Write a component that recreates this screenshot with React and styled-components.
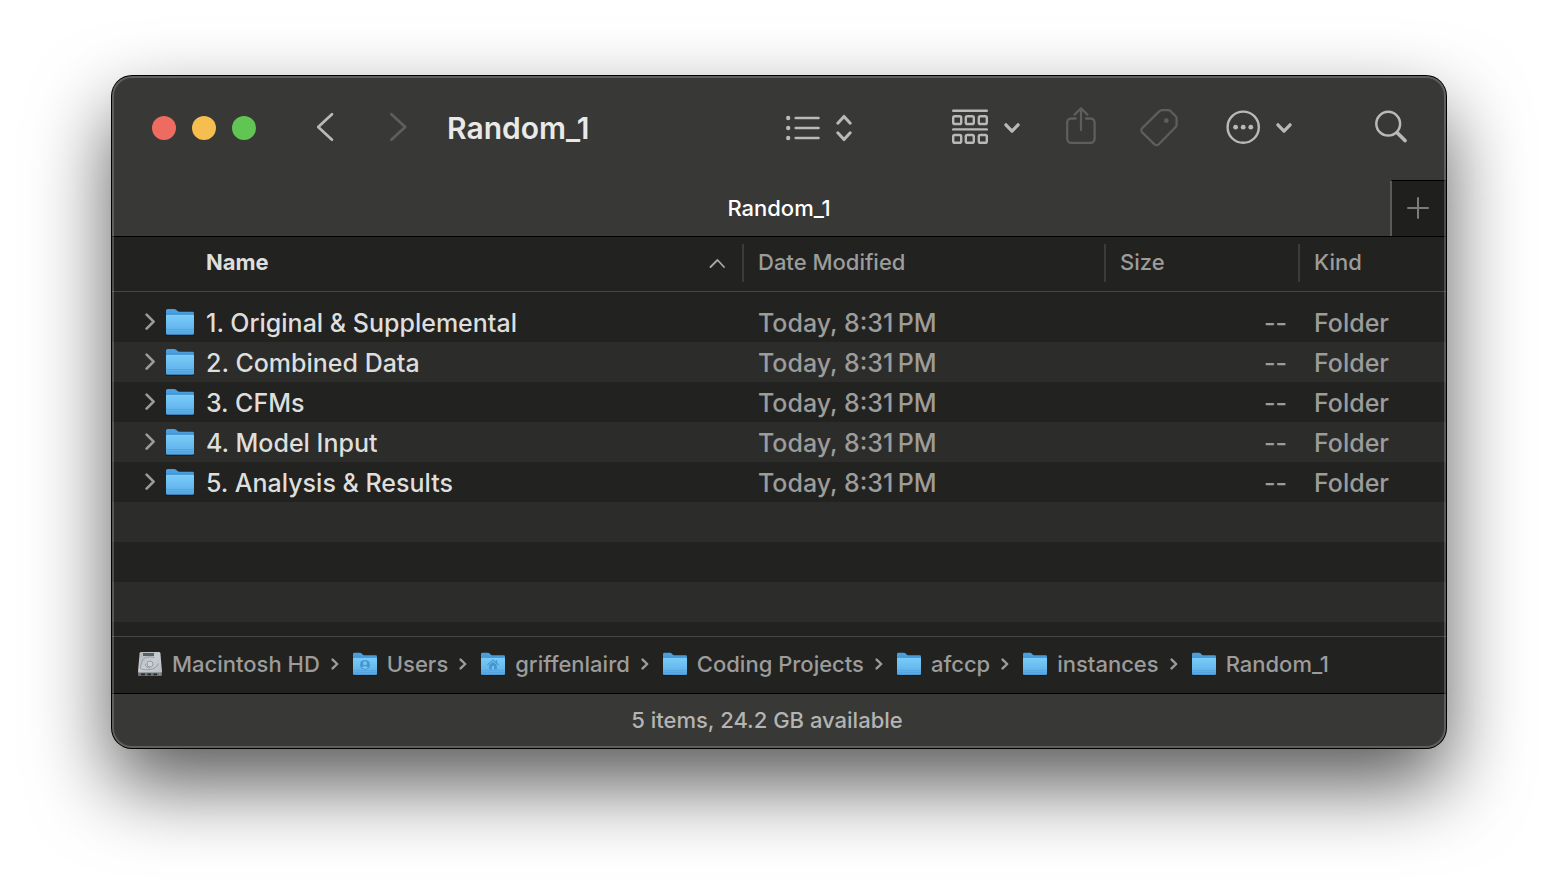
import React from "react";
import styled, { createGlobalStyle } from "styled-components";

const GlobalStyle = createGlobalStyle`
  *, *::before, *::after { box-sizing: border-box; }
  body {
    margin: 0;
    background: #fff;
    font-family: Inter, "Liberation Sans", sans-serif;
    -webkit-font-smoothing: antialiased;
  }
  button { border: 0; padding: 0; background: none; color: inherit; font: inherit; }
  a { color: inherit; text-decoration: none; }
`;

const Desktop = styled.main`
  display: flex;
  min-height: 100vh;
  padding: 76px 112px 148px;
`;

const Window = styled.section`
  position: relative;
  display: flex;
  flex-direction: column;
  flex: 1;
  min-width: 0;
  border-radius: 20px;
  overflow: hidden;
  background: #222221;
  box-shadow: 0 0 0 1px #000, 0 36px 80px rgba(0, 0, 0, 0.66);

  &::after {
    content: "";
    position: absolute;
    inset: 0;
    border: 2px solid rgba(255, 255, 255, 0.2);
    border-radius: 20px;
    pointer-events: none;
  }
`;

const Toolbar = styled.header`
  display: flex;
  align-items: center;
  height: 104px;
  padding: 0 39px 0 40px;
  background: #383836;
  color: #b9b9b8;
`;

const Lights = styled.div`
  display: flex;
  gap: 16px;
  margin-right: 60px;
`;

const Light = styled.button`
  width: 24px;
  height: 24px;
  border-radius: 50%;
  background: ${(p) => p.$color};
`;

const History = styled.div`
  display: flex;
  gap: 55px;
  margin-right: 40px;
`;

const Title = styled.h1`
  flex: 1;
  margin: 0;
  color: #e9e9e8;
  font-size: 30px;
  line-height: 36px;
  font-weight: 600;
`;

const Tools = styled.div`
  display: flex;
  align-items: center;
  gap: 46px;
`;

const ToolButton = styled.button`
  display: flex;
  align-items: center;
  gap: 16px;
  margin-left: ${(p) => p.$before || 0}px;
  color: ${(p) => (p.$dim ? "#5e5e5c" : "inherit")};
`;

const Icon = styled.svg`
  display: block;
  flex: none;
  fill: none;
  stroke: currentColor;
  stroke-linecap: round;
  stroke-linejoin: round;
`;

const TabBar = styled.nav`
  display: flex;
  height: 56px;
  background: #383836;
`;

const Tab = styled.button`
  flex: 1;
  padding-left: 56px;
  color: #fff;
  font-size: 22px;
  line-height: 28px;
  font-weight: 500;
`;

const NewTab = styled.button`
  display: flex;
  align-items: center;
  justify-content: center;
  width: 56px;
  padding: 0 2px 2px 0;
  border-top: 1px solid #000;
  border-left: 2px solid #5a5a59;
  background: #1f1f1e;
  color: #7b7b7a;
`;

const FileTable = styled.table`
  width: 100%;
  table-layout: fixed;
  border-spacing: 0;

  tbody::before {
    content: "";
    display: block;
    height: 10px;
  }
`;

const Column = styled.col`
  width: ${(p) => p.$width};
`;

const HeadCell = styled.th`
  height: 56px;
  padding: 7px 0 9px;
  border-top: 1px solid #000;
  border-bottom: 1px solid #454544;
  text-align: left;
  vertical-align: top;
`;

const SortButton = styled.button`
  display: flex;
  align-items: center;
  justify-content: space-between;
  width: 100%;
  height: 38px;
  padding: 0 17px 2px ${(p) => (p.$active ? 94 : 14)}px;
  border-left: ${(p) => (p.$active ? "0" : "2px solid #3b3b3a")};
  color: ${(p) => (p.$active ? "#dededd" : "#9c9c9b")};
  font-size: 22px;
  font-weight: ${(p) => (p.$active ? 700 : 500)};
`;

const SortArrow = styled(Icon)`
  color: #a8a8a7;
`;

const FileRow = styled.tr`
  height: 40px;
  background: ${(p) => (p.$shaded ? "#2c2c2b" : "transparent")};
`;

const Cell = styled.td`
  padding: 2px 11px 0 16px;
  color: #9c9c9b;
  font-size: 25px;
  line-height: 32px;
  font-weight: 500;
  text-align: ${(p) => p.$align || "left"};
  white-space: nowrap;
`;

const NameCell = styled.td`
  padding: 0 0 0 33px;
`;

const NameLine = styled.div`
  display: flex;
  align-items: center;
`;

const FileName = styled.span`
  padding-top: 2px;
  color: #dededd;
  font-size: 25px;
  line-height: 32px;
  font-weight: 500;
  white-space: nowrap;
`;

const Disclosure = styled.button`
  margin-right: 11px;
  color: #9c9c9b;
`;

const FileIcon = styled.svg`
  display: block;
  flex: none;
  margin-right: ${(p) => p.$after}px;
`;

const EmptyRows = styled.div`
  flex: 1;
  background: repeating-linear-gradient(#2c2c2b 0 40px, #222221 40px 80px);
`;

const PathBar = styled.nav`
  height: 58px;
  border-top: 1px solid #454544;
  border-bottom: 1px solid #000;
  background: #222221;
`;

const PathList = styled.ol`
  display: flex;
  align-items: center;
  height: 100%;
  margin: 0;
  padding: 0 0 2px 26px;
  list-style: none;
`;

const PathItem = styled.li`
  display: flex;
  align-items: center;
  color: #9c9c9b;
`;

const PathLink = styled.a`
  display: flex;
  align-items: center;
  font-size: 22px;
  line-height: 28px;
  font-weight: 500;
`;

const PathArrow = styled(Icon)`
  margin: 0 14px 0 11px;
`;

const StatusBar = styled.footer`
  display: flex;
  align-items: center;
  justify-content: center;
  height: 54px;
  padding: 0 24px 2px 0;
  background: #383836;
  color: #b4b4b3;
  font-size: 22px;
  line-height: 28px;
  font-weight: 500;
`;

function ChevronDown() {
  return (
    <Icon width="16" height="44" strokeWidth="3.2">
      <path d="M1.9 18.8L8 25.2L14.1 18.8" />
    </Icon>
  );
}

function Folder({ size, after, badge, id }) {
  return (
    <FileIcon width={size} height={size} viewBox="0 0 28 28" $after={after} aria-hidden="true">
      <defs>
        <linearGradient id={id + "f"} x1="0" y1="0" x2="0" y2="1">
          <stop offset="0" stopColor="#7accf8" />
          <stop offset="0.75" stopColor="#62b5ec" />
          <stop offset="1" stopColor="#58a8e0" />
        </linearGradient>
      </defs>
      <rect x="0.3" y="5" width="27.4" height="22.8" rx="1.5" fill="#15191d" />
      <path d="M0 2.6Q0 1 1.6 1H8.2Q9.4 1 10.2 1.8L11.6 3.1Q12.4 3.8 13.6 3.8H26.6Q28 3.8 28 5.2V12H0Z" fill="#4a9fdc" />
      <path d="M0 5.4H28V25.4Q28 26.8 26.6 26.8H1.4Q0 26.8 0 25.4Z" fill="#3f8cca" />
      <path d="M0 7.6Q0 6.8 1 6.8H27Q28 6.8 28 7.6V24.8Q28 26.2 26.6 26.2H1.4Q0 26.2 0 24.8Z" fill={`url(#${id}f)`} />
      <path d="M0 21.5H28M0 23.8H28" stroke="#4c9bd6" strokeWidth="0.6" />
      {badge === "user" && (
        <g>
          <circle cx="14" cy="15" r="5.8" fill="#4795d3" />
          <circle cx="14" cy="13.2" r="2.3" fill="#76c5f4" />
          <path d="M10.2 18.2Q14 14.8 17.8 18.2Q14 21.2 10.2 18.2Z" fill="#76c5f4" />
        </g>
      )}
      {badge === "home" && (
        <g>
          <path d="M7.6 15L14 9.2L20.4 15" fill="none" stroke="#4795d3" strokeWidth="1.3" />
          <path d="M17.2 9.6H18.8V13H17.2Z" fill="#4795d3" />
          <path d="M9.6 15.2L14 11.3L18.4 15.2V20.4H9.6Z" fill="#4795d3" />
          <path d="M12.8 16.4H15.2V20.4H12.8Z" fill="#76c5f4" />
        </g>
      )}
    </FileIcon>
  );
}

function Disk() {
  return (
    <FileIcon width="24" height="26" viewBox="0 0 24 26" $after={10} aria-hidden="true">
      <defs>
        <linearGradient id="disk-top" x1="0" y1="0" x2="1" y2="1">
          <stop offset="0" stopColor="#b0b6ba" />
          <stop offset="0.5" stopColor="#c6ccd0" />
          <stop offset="1" stopColor="#b9bfc4" />
        </linearGradient>
      </defs>
      <path d="M0 21H24V24Q24 25 23 25H1Q0 25 0 24Z" fill="#6e7377" />
      <path d="M3 1H21Q22.2 1 22.4 2.2L24 20.5Q24 21.6 23 21.6H1Q0 21.6 0 20.5L1.6 2.2Q1.8 1 3 1Z" fill="url(#disk-top)" />
      <path d="M5 2H16V5H5Z" fill="#5c6165" />
      <path d="M16.5 6.6C10 4.6 5 7 4.2 10C3.4 12.6 2.4 15 2.4 17.4C5 19.6 18.6 20 20.4 12.4M7.4 12.8C7.4 16 9.6 17 12 17" fill="none" stroke="#92989c" strokeWidth="0.9" />
      <circle cx="12" cy="13" r="3" fill="#cad0d3" stroke="#8f959a" strokeWidth="0.9" />
      <path d="M3 23.4H7M9.5 23.4H13M15.5 23.4H19" stroke="#26292b" strokeWidth="1.8" />
      <circle cx="21.8" cy="23.2" r="0.7" fill="#7bc96f" />
    </FileIcon>
  );
}

const files = [
  "1. Original & Supplemental",
  "2. Combined Data",
  "3. CFMs",
  "4. Model Input",
  "5. Analysis & Results",
];

const path = [
  { name: "Macintosh HD", disk: true },
  { name: "Users", badge: "user" },
  { name: "griffenlaird", badge: "home" },
  { name: "Coding Projects" },
  { name: "afccp" },
  { name: "instances" },
  { name: "Random_1" },
];

const squareColumns = [1.2, 13.8, 26.8];

export default function App() {
  return (
    <>
      <GlobalStyle />
      <Desktop>
        <Window>
          <Toolbar>
            <Lights>
              <Light $color="#ed6b60" aria-label="Close" />
              <Light $color="#f5be4f" aria-label="Minimize" />
              <Light $color="#61c554" aria-label="Zoom" />
            </Lights>
            <History>
              <ToolButton aria-label="Back">
                <Icon width="18" height="44" strokeWidth="2.7">
                  <path d="M16 8.2L2.2 21L16 33.7" />
                </Icon>
              </ToolButton>
              <ToolButton $dim aria-label="Forward">
                <Icon width="18" height="44" strokeWidth="2.7">
                  <path d="M2.4 8.2L16.2 21L2.4 33.7" />
                </Icon>
              </ToolButton>
            </History>
            <Title>Random_1</Title>
            <Tools>
              <ToolButton aria-label="View as list">
                <Icon width="34" height="44" strokeWidth="2.4">
                  <g fill="currentColor" stroke="none">
                    <circle cx="2.2" cy="12" r="2.2" />
                    <circle cx="2.2" cy="22" r="2.2" />
                    <circle cx="2.2" cy="32" r="2.2" />
                  </g>
                  <path d="M9.6 12H32.6M9.6 22H32.6M9.6 32H32.6" />
                </Icon>
                <Icon width="16" height="44" strokeWidth="3">
                  <path d="M1.8 17.2L8 10.4L14.2 17.2M1.8 26.8L8 33.6L14.2 26.8" />
                </Icon>
              </ToolButton>
              <ToolButton $before={54} aria-label="Group">
                <Icon width="36" height="44" strokeWidth="2.4">
                  <path d="M1.2 4.7H34.8M1.2 23.4H34.8" />
                  {squareColumns.map((x) => (
                    <g key={x}>
                      <rect x={x} y="10.2" width="8" height="7.8" rx="1.6" />
                      <rect x={x} y="29" width="8" height="7.8" rx="1.6" />
                    </g>
                  ))}
                </Icon>
                <ChevronDown />
              </ToolButton>
              <ToolButton $dim aria-label="Share">
                <Icon width="30" height="44" strokeWidth="2.3">
                  <path d="M9.8 12.5H5.2a4 4 0 0 0-4 4V32.8a4 4 0 0 0 4 4H24.6a4 4 0 0 0 4-4V16.5a4 4 0 0 0-4-4H20M15 24V2.4M8.6 8.6L15 2.2L21.4 8.6" />
                </Icon>
              </ToolButton>
              <ToolButton $dim $before={-2} aria-label="Tags">
                <Icon width="38" height="44" strokeWidth="2.3">
                  <path d="M22 4.2H28.5a3 3 0 0 1 2 .8L35.7 10.2a3 3 0 0 1 .9 2V18.5a4 4 0 0 1-1.2 2.8L18.8 38.3a3 3 0 0 1-4.3 0L2.2 26.4a3 3 0 0 1 0-4.3L19.2 5.4A4 4 0 0 1 22 4.2Z" />
                  <circle cx="26.3" cy="14.7" r="2.4" fill="currentColor" stroke="none" />
                </Icon>
              </ToolButton>
              <ToolButton $before={2} aria-label="More actions">
                <Icon width="34" height="44" strokeWidth="2.4">
                  <circle cx="17.2" cy="21.2" r="15.6" />
                  <g fill="currentColor" stroke="none">
                    <circle cx="9.6" cy="21.2" r="2.4" />
                    <circle cx="17.2" cy="21.2" r="2.4" />
                    <circle cx="24.8" cy="21.2" r="2.4" />
                  </g>
                </Icon>
                <ChevronDown />
              </ToolButton>
              <ToolButton $before={37} aria-label="Search">
                <Icon width="32" height="44" strokeWidth="2.5">
                  <circle cx="13.2" cy="17.7" r="11.9" />
                  <path d="M22.2 26.7L30 34.6" strokeWidth="3.6" />
                </Icon>
              </ToolButton>
            </Tools>
          </Toolbar>

          <TabBar aria-label="Tabs">
            <Tab>Random_1</Tab>
            <NewTab aria-label="New tab">
              <Icon width="22" height="22" strokeWidth="2">
                <path d="M11 1V21M1 11H21" />
              </Icon>
            </NewTab>
          </TabBar>

          <FileTable>
            <colgroup>
              <Column $width="auto" />
              <Column $width="362px" />
              <Column $width="194px" />
              <Column $width="148px" />
            </colgroup>
            <thead>
              <tr>
                <HeadCell scope="col" aria-sort="ascending">
                  <SortButton $active>
                    Name
                    <SortArrow width="16" height="12" strokeWidth="1.8">
                      <path d="M1.5 11L8.5 4L15 11" />
                    </SortArrow>
                  </SortButton>
                </HeadCell>
                <HeadCell scope="col"><SortButton>Date Modified</SortButton></HeadCell>
                <HeadCell scope="col"><SortButton>Size</SortButton></HeadCell>
                <HeadCell scope="col"><SortButton>Kind</SortButton></HeadCell>
              </tr>
            </thead>
            <tbody>
              {files.map((name, i) => (
                <FileRow key={name} $shaded={i % 2 === 1}>
                  <NameCell>
                    <NameLine>
                      <Disclosure aria-label={`Expand ${name}`}>
                        <Icon width="10" height="18" strokeWidth="2.6">
                          <path d="M1.6 1.6L8.6 8.6L1.6 15.6" />
                        </Icon>
                      </Disclosure>
                      <Folder size={28} after={12} id={`row${i}`} />
                      <FileName>{name}</FileName>
                    </NameLine>
                  </NameCell>
                  <Cell>{"Today, 8:31\u202fPM"}</Cell>
                  <Cell $align="right">--</Cell>
                  <Cell>Folder</Cell>
                </FileRow>
              ))}
            </tbody>
          </FileTable>
          <EmptyRows />

          <PathBar aria-label="Path">
            <PathList>
              {path.map((item, i) => (
                <PathItem key={item.name}>
                  <PathLink href="#">
                    {item.disk ? <Disk /> : <Folder size={24} after={10} badge={item.badge} id={`path${i}`} />}
                    {item.name}
                  </PathLink>
                  {i < path.length - 1 && (
                    <PathArrow width="8" height="12" strokeWidth="2.4">
                      <path d="M1.6 1.6L6.2 6L1.6 10.4" />
                    </PathArrow>
                  )}
                </PathItem>
              ))}
            </PathList>
          </PathBar>
          <StatusBar>5 items, 24.2 GB available</StatusBar>
        </Window>
      </Desktop>
    </>
  );
}
